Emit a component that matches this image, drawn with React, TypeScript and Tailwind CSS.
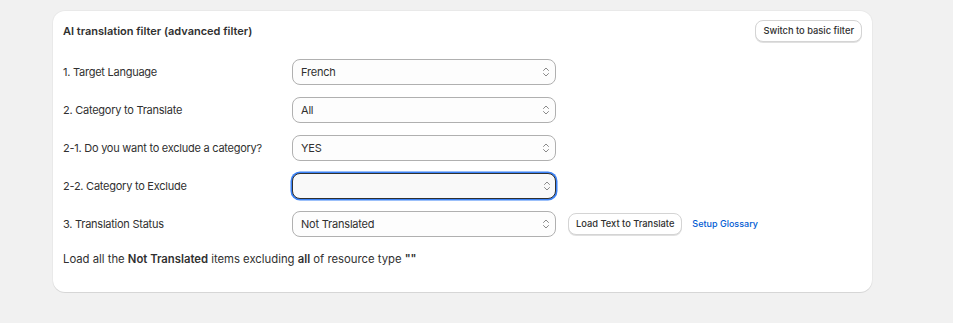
const rows = [
  { label: "1. Target Language", value: "French" },
  { label: "2. Category to Translate", value: "All" },
  { label: "2-1. Do you want to exclude a category?", value: "YES" },
  { label: "2-2. Category to Exclude", value: "", focused: true },
];

function Chevrons() {
  return (
    <svg width="10" height="14" viewBox="0 0 10 14" fill="none" className="shrink-0">
      <path d="M2.5 5.5 5 3l2.5 2.5" stroke="#8a8a8a" strokeWidth="1" strokeLinecap="round" strokeLinejoin="round" />
      <path d="M2.5 8.5 5 11l2.5-2.5" stroke="#8a8a8a" strokeWidth="1" strokeLinecap="round" strokeLinejoin="round" />
    </svg>
  );
}

function Select({ value, focused }: { value: string; focused?: boolean }) {
  return (
    <div
      className={
        focused
          ? "w-[264px] h-[26px] rounded-[8px] bg-[#f9f9f9] border-[1.5px] border-[#303030] ring-[1.5px] ring-[#3b82f6] flex items-center justify-between pl-[8px] pr-[3px]"
          : "w-[264px] h-[26px] rounded-[8px] bg-[#fdfdfd] border border-[#b0b0b0] flex items-center justify-between pl-[8px] pr-[4px]"
      }
    >
      <span className="text-[11px] tracking-[-0.2px] text-[#303030]">{value}</span>
      <Chevrons />
    </div>
  );
}

function Row({ label, children }: { label: string; children: React.ReactNode }) {
  return (
    <div className="flex items-center">
      <div className="w-[229px] text-[11px] tracking-[-0.25px] text-[#303030]">{label}</div>
      {children}
    </div>
  );
}

const btn =
  "h-[22px] px-[7px] rounded-[8px] bg-white border border-[#d4d4d4] shadow-[0_1px_0_0_rgba(0,0,0,0.12)] text-[9.3px] font-medium text-[#303030]";

export default function App() {
  return (
    <div className="min-h-[323px] bg-[#f1f1f1] pl-[53px] pt-[11px] font-['Inter',sans-serif]">
      <div className="w-[819px] bg-white rounded-[12px] shadow-[0_1px_0_0_rgba(0,0,0,0.08),0_0_0_1px_rgba(0,0,0,0.03)] px-[10px] pt-[9px] pb-[24px]">
        <div className="flex items-center justify-between">
          <h2 className="text-[11px] font-semibold text-[#303030]">AI translation filter (advanced filter)</h2>
          <button className={btn}>Switch to basic filter</button>
        </div>

        <div className="mt-[17px] flex flex-col gap-[12px]">
          {rows.map((r) => (
            <Row key={r.label} label={r.label}>
              <Select value={r.value} focused={r.focused} />
            </Row>
          ))}
          <Row label="3. Translation Status">
            <Select value="Not Translated" />
            <button className={"ml-[12px] " + btn}>Load Text to Translate</button>
            <a className="ml-[10px] text-[9px] font-medium text-[#005bd3]">Setup Glossary</a>
          </Row>
        </div>

        <p className="mt-[14px] text-[11.3px] text-[#303030]">
          Load all the <span className="font-semibold">Not Translated</span> items excluding{" "}
          <span className="font-semibold">all</span> of resource type <span className="font-semibold">""</span>
        </p>
      </div>
    </div>
  );
}
